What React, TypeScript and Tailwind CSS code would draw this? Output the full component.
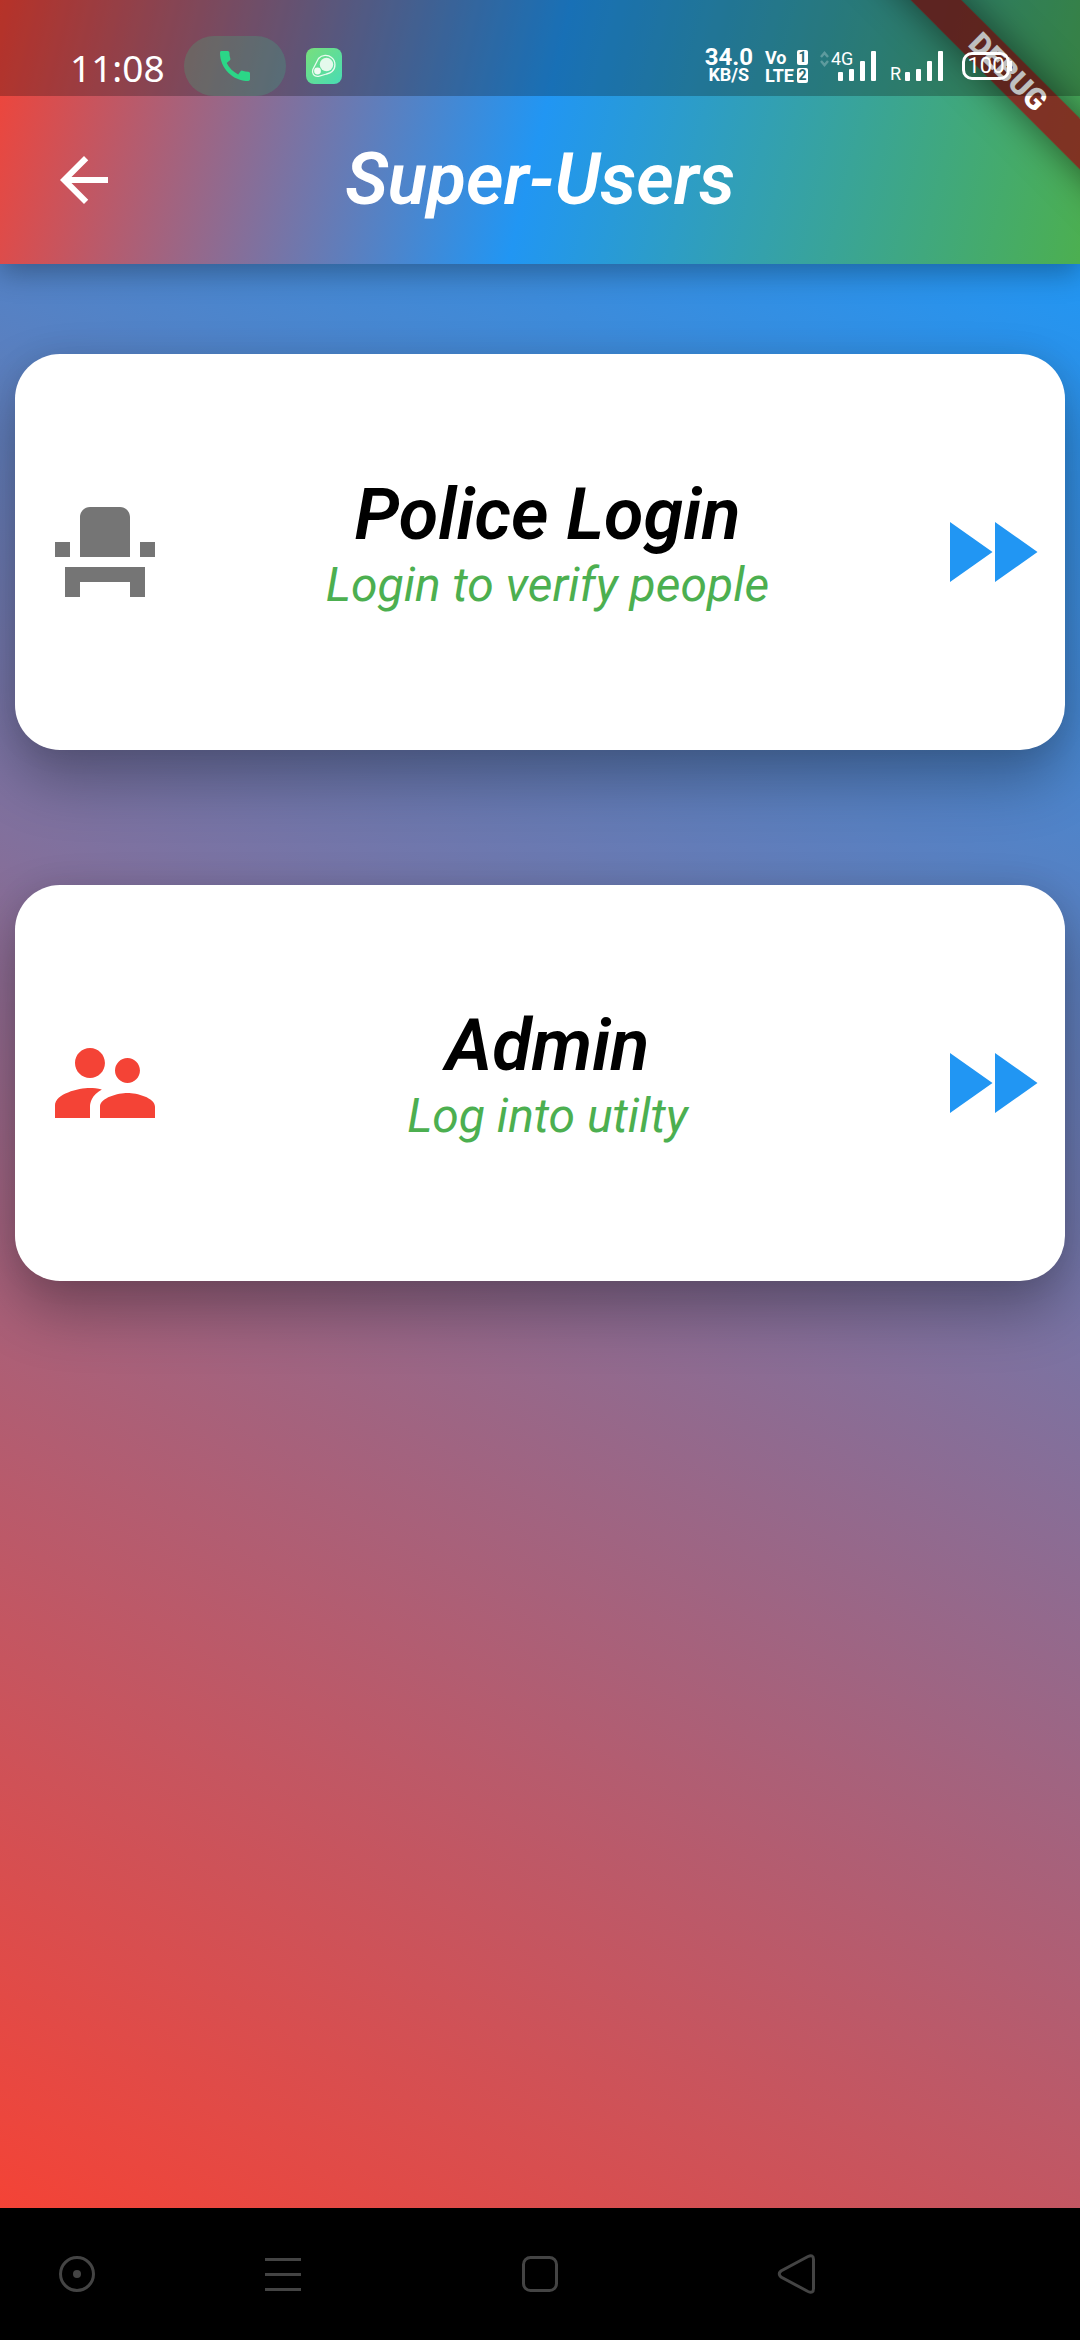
import type { ReactNode } from "react";
import {
  MdArrowBack,
  MdCall,
  MdEventSeat,
  MdFastForward,
  MdSupervisorAccount,
} from "react-icons/md";

function SignalBars() {
  return (
    <svg className="h-[30px] w-[38px]" viewBox="0 0 38 30" fill="white" aria-hidden="true">
      <rect x="0" y="21" width="5" height="9" rx="1" />
      <rect x="11" y="18" width="5" height="12" rx="1" />
      <rect x="22" y="10" width="5" height="20" rx="1" />
      <rect x="33" y="0" width="5" height="30" rx="1" />
    </svg>
  );
}

function ChatAppIcon() {
  return (
    <svg className="h-9 w-9" viewBox="0 0 36 36" aria-hidden="true">
      <defs>
        <linearGradient id="chatFill" x1="0" y1="0" x2="1" y2="1">
          <stop offset="0" stopColor="#78df7c" />
          <stop offset="1" stopColor="#48dcb4" />
        </linearGradient>
      </defs>
      <rect width="36" height="36" rx="8" fill="url(#chatFill)" />
      <path
        d="M12.5 10.5C16 6.500 22 6.500 25.500 9.500C30 13 30 20 26 23.500C24.500 25 22.500 25.500 20.500 26L12.500 28.300C8 29 5.500 25.500 6.800 21.500Z"
        fill="none"
        stroke="#e9fbef"
        strokeWidth="1.3"
        strokeLinejoin="round"
      />
      <circle cx="20.500" cy="16.500" r="6.700" fill="#e4f9ec" />
      <circle cx="11.500" cy="23" r="3.400" fill="#effcf3" />
    </svg>
  );
}

function StatusBar() {
  return (
    <div className="flex h-24 items-center justify-between bg-black/25 pt-9 pr-[68px] pl-[70px] text-white">
      <div className="flex items-center">
        <span className="w-[114px] pt-0.5 font-['Noto_Sans',sans-serif] text-[37px] leading-none">11:08</span>
        <span className="flex h-15 w-[102px] items-center justify-center rounded-full bg-[#2ed687]/20">
          <MdCall className="h-10 w-10 text-[#2bd687]" aria-hidden="true" />
        </span>
        <span className="ml-5">
          <ChatAppIcon />
        </span>
      </div>

      <div className="flex items-center">
        <div className="flex flex-col items-center font-bold">
          <span className="text-[24px] leading-[18px]">34.0</span>
          <span className="text-[18px] leading-[18px]">KB/S</span>
        </div>

        <div className="ml-3 grid grid-cols-[32px_11px] items-center gap-y-[3px] font-bold">
          <span className="text-[18px] leading-[15px]">Vo</span>
          <span className="h-[15px] rounded-xs bg-white text-center text-[14px] leading-[15px] text-[#286a72]">1</span>
          <span className="text-[18px] leading-[15px]">LTE</span>
          <span className="h-[15px] rounded-xs bg-white text-center text-[14px] leading-[15px] text-[#286a72]">2</span>
        </div>

        <div className="relative ml-3 flex w-14 justify-end">
          <svg
            className="absolute top-0 left-0 h-4 w-[9px] opacity-25"
            viewBox="0 0 9 16"
            fill="none"
            stroke="white"
            strokeWidth="2.5"
            aria-hidden="true"
          >
            <path d="M1 6l3.500-4L8 6M1 10l3.500 4L8 10" />
          </svg>
          <span className="absolute -top-0.5 left-[11px] text-[18px] leading-5">4G</span>
          <SignalBars />
        </div>

        <div className="ml-[14px] flex items-end gap-1">
          <span className="text-[18px] leading-[15px]">R</span>
          <SignalBars />
        </div>

        <div className="ml-[19px] flex items-center">
          <span className="flex h-7 w-12 items-center justify-center rounded-[10px] border-3 border-white text-[22px] leading-none">
            100
          </span>
          <span className="h-2.5 w-0.5 bg-white" />
        </div>
      </div>
    </div>
  );
}

function DebugRibbon() {
  return (
    <div className="pointer-events-none absolute top-0 right-0 h-66 w-66 overflow-hidden">
      <div className="absolute top-[54px] -left-2 flex h-9 w-[400px] rotate-45 items-center justify-center bg-[#8d1616]/81 text-[30px] leading-none font-black text-white shadow-[0_0_36px_rgba(0,0,0,0.5)]">
        DEBUG
      </div>
    </div>
  );
}

type LoginCardProps = { icon: ReactNode; title: string; subtitle: string };

function LoginCard({ icon, title, subtitle }: LoginCardProps) {
  return (
    <button
      type="button"
      className="flex h-[396px] w-full items-center justify-between rounded-[45px] bg-white pr-[15px] pl-[30px] shadow-[0_30px_60px_rgba(0,0,0,0.3),0_0_30px_rgba(0,0,0,0.08)]"
    >
      {icon}
      <span className="flex flex-col items-center pb-[18px] italic">
        <span className="text-[72px] leading-[84px] font-semibold text-black">{title}</span>
        <span className="text-[48px] leading-[56px] text-[#4caf50]">{subtitle}</span>
      </span>
      <MdFastForward className="h-30 w-30 text-[#2196f3]" aria-hidden="true" />
    </button>
  );
}

function NavigationBar() {
  const button = "flex h-full items-center justify-center";
  const drawing = {
    className: "h-10 w-10",
    viewBox: "0 0 40 40",
    fill: "none",
    stroke: "#444444",
    strokeWidth: 3,
    "aria-hidden": true,
  };
  return (
    <nav className="grid h-33 grid-cols-[154px_1fr_1fr_1fr] bg-black pr-[155px]">
      <button type="button" aria-label="Assistant" className={button}>
        <svg {...drawing}>
          <circle cx="20" cy="20" r="16.500" />
          <circle cx="20" cy="20" r="4" fill="#444444" stroke="none" />
        </svg>
      </button>
      <button type="button" aria-label="Menu" className={button}>
        <svg {...drawing}>
          <path d="M2 5.500H38M2 20.500H38M2 35.500H38" />
        </svg>
      </button>
      <button type="button" aria-label="Home" className={button}>
        <svg {...drawing}>
          <rect x="3.500" y="3.500" width="33" height="33" rx="7" />
        </svg>
      </button>
      <button type="button" aria-label="Back" className={button}>
        <svg {...drawing}>
          <path d="M31 2.500Q36.500 0 36.500 5.500V34.500Q36.500 40 31 37.500L4 23Q0.500 20 4 17Z" />
        </svg>
      </button>
    </nav>
  );
}

export default function App() {
  return (
    <div className="relative flex min-h-screen flex-col overflow-x-hidden font-['Roboto',sans-serif]">
      <header className="relative z-10 bg-[linear-gradient(103.7deg,#f44336,#2196f3,#4caf50)] shadow-[0_9px_27px_rgba(0,0,0,0.3)]">
        <DebugRibbon />
        <div className="relative">
          <StatusBar />
        </div>
        <div className="grid h-42 grid-cols-[72px_1fr_72px] items-center px-12">
          <button type="button" aria-label="Back" className="text-white">
            <MdArrowBack className="h-18 w-18" aria-hidden="true" />
          </button>
          <h1 className="text-center text-[72px] leading-[84px] font-semibold text-white italic">Super-Users</h1>
        </div>
      </header>

      <main className="flex flex-1 flex-col gap-[135px] bg-[linear-gradient(29deg,#f44336,#2196f3)] px-[15px] pt-[90px]">
        <LoginCard
          icon={<MdEventSeat className="h-30 w-30 text-[#757575]" aria-hidden="true" />}
          title="Police Login"
          subtitle="Login to verify people"
        />
        <LoginCard
          icon={<MdSupervisorAccount className="h-30 w-30 text-[#f44336]" aria-hidden="true" />}
          title="Admin"
          subtitle="Log into utilty"
        />
      </main>

      <NavigationBar />
    </div>
  );
}
